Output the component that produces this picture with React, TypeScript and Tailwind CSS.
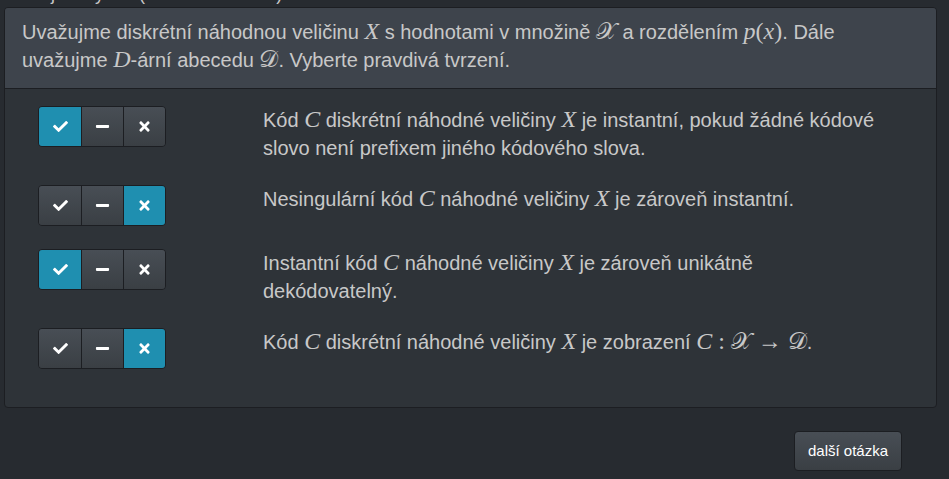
import React from "react";
import { FaCheck, FaMinus, FaTimes } from "react-icons/fa";

const M = ({ children }: { children: React.ReactNode }) => (
  <span className="italic text-[24px] leading-none" style={{ fontFamily: '"Liberation Serif", "DejaVu Serif", serif' }}>
    {children}
  </span>
);
const Cal = ({ children }: { children: React.ReactNode }) => (
  <span className="text-[24px] leading-none" style={{ fontFamily: '"DejaVu Serif", "DejaVu Sans", serif' }}>
    {children}
  </span>
);
const R = ({ children }: { children: React.ReactNode }) => (
  <span className="text-[24px] leading-none" style={{ fontFamily: '"Liberation Serif", serif' }}>
    {children}
  </span>
);

function Toggle({ active }: { active: 0 | 2 }) {
  const base =
    "w-[42px] h-full flex items-center justify-center text-white text-[15px] [filter:drop-shadow(0_1px_0_rgba(0,0,0,0.7))]";
  const on = "bg-[#1f8fb0]";
  const off = "bg-gradient-to-b from-[#484e55] to-[#3a3f44]";
  return (
    <div className="flex h-[41px] w-[128px] rounded-[4px] border border-[#1c1e22] overflow-hidden shrink-0">
      <div className={`${base} ${active === 0 ? on : off}`}>
        <FaCheck />
      </div>
      <div className={`${base} ${off} border-l border-[#1c1e22]`}>
        <FaMinus />
      </div>
      <div className={`${base} ${active === 2 ? on : off} border-l border-[#1c1e22]`}>
        <FaTimes />
      </div>
    </div>
  );
}

function Row({ active, children }: { active: 0 | 2; children: React.ReactNode }) {
  return (
    <div className="flex">
      <div className="w-[225px] shrink-0">
        <Toggle active={active} />
      </div>
      <div className="flex-1 pr-[55px] text-[20px] leading-[28px] text-[#c8c8c8]">{children}</div>
    </div>
  );
}

export default function App() {
  return (
    <div
      className="min-h-screen bg-[#272b30] text-[#c8c8c8] overflow-hidden"
      style={{ fontFamily: '"Liberation Sans", Arial, sans-serif' }}
    >
      <div className="h-[7px] overflow-hidden pl-[2px]">
        <div className="mt-[-16px] text-[18px] leading-[20px] whitespace-nowrap">
          ovaní je 5. týden (17. - 20. 3. 2020).
        </div>
      </div>
      <div className="ml-[4px] mr-[12px] border border-[#1c1e22] rounded-[4px] bg-[#2e3338] overflow-hidden">
        <div className="bg-[#3e444c] border-b border-[#1c1e22] px-[17px] pt-[10px] pb-[14px] text-[20px] leading-[28px]">
          Uvažujme diskrétní náhodnou veličinu <M>X</M> s hodnotami v množině <Cal>𝒳</Cal> a rozdělením{" "}
          <M>p</M>
          <R>(</R>
          <M>x</M>
          <R>)</R>. Dále uvažujme <M>D</M>-ární abecedu <Cal>𝒟</Cal>. Vyberte pravdivá tvrzení.
        </div>
        <div className="pl-[33px] pt-[17px] pb-[38px] flex flex-col gap-[23px]">
          <Row active={0}>
            Kód <M>C</M> diskrétní náhodné veličiny <M>X</M> je instantní, pokud žádné kódové slovo není prefixem
            jiného kódového slova.
          </Row>
          <Row active={2}>
            Nesingulární kód <M>C</M> náhodné veličiny <M>X</M> je zároveň instantní.
          </Row>
          <Row active={0}>
            Instantní kód <M>C</M> náhodné veličiny <M>X</M> je zároveň unikátně dekódovatelný.
          </Row>
          <Row active={2}>
            Kód <M>C</M> diskrétní náhodné veličiny <M>X</M> je zobrazení <M>C</M>
            <R> : </R>
            <Cal>𝒳</Cal>
            <R> → </R>
            <Cal>𝒟</Cal>.
          </Row>
        </div>
      </div>
      <div className="flex justify-end pr-[47px] mt-[23px]">
        <button className="h-[40px] px-[13px] rounded-[4px] border border-[#1c1e22] bg-gradient-to-b from-[#484e55] to-[#3a3f44] text-white text-[15px]">
          další otázka
        </button>
      </div>
    </div>
  );
}
